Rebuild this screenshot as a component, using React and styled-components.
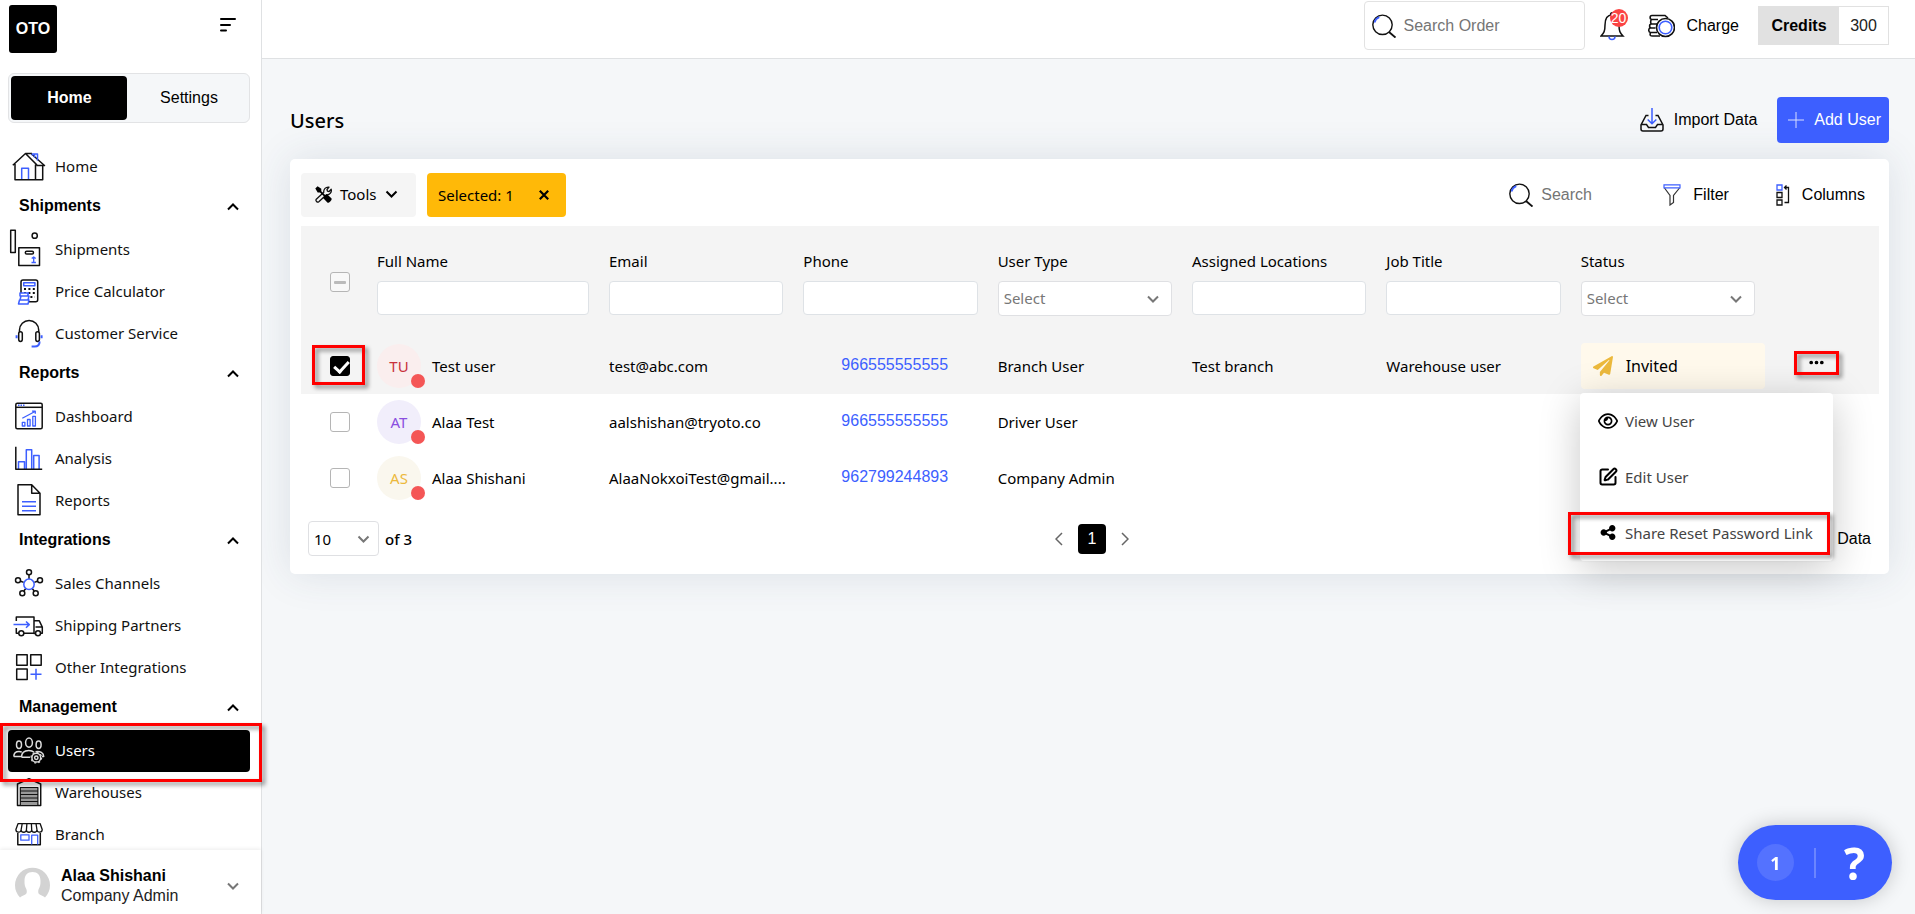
import React, { useState } from "react";
import styled, { createGlobalStyle, css } from "styled-components";
import { SquarePen } from "lucide-react";
import { FaPaperPlane } from "react-icons/fa";
import { FaRegEye, FaShareNodes, FaEllipsis } from "react-icons/fa6";

const blue = "#3d5fff";
const humanist = `"Segoe UI", "Noto Sans", "Open Sans", sans-serif`;
const grotesk = `Arial, "Liberation Sans", sans-serif`;

const GlobalStyle = createGlobalStyle`
  * {
    box-sizing: border-box;
  }
  body {
    margin: 0;
    background: #f5f7f9;
    color: #000;
    font-family: ${grotesk};
    font-size: 16px;
  }
  button, input, select {
    font-family: inherit;
    font-size: inherit;
    color: inherit;
  }
  button {
    border: none;
    background: none;
    padding: 0;
    cursor: pointer;
  }
  svg {
    display: block;
    flex: none;
  }
`;

const Layout = styled.div`
  display: grid;
  grid-template-columns: 262px minmax(0, 1fr);
  min-height: 100vh;
`;

/* ---------- sidebar ---------- */

const Sidebar = styled.aside`
  position: sticky;
  top: 0;
  z-index: 2;
  height: 100vh;
  display: flex;
  flex-direction: column;
  background: #fff;
  border-right: 1px solid #dfe1e3;
`;
const Brand = styled.div`
  display: flex;
  justify-content: space-between;
  padding: 5px 25px 20px 9px;
`;
const Logo = styled.div`
  width: 48px;
  height: 48px;
  border-radius: 3px;
  background: #000;
  color: #fff;
  font-weight: 700;
  font-size: 16px;
  line-height: 48px;
  text-align: center;
`;
const MenuToggle = styled.button`
  align-self: flex-start;
  margin-top: 13px;
`;
const Tabs = styled.div`
  display: grid;
  grid-template-columns: 116px 1fr;
  height: 50px;
  margin: 0 11px 0 8px;
  padding: 2px;
  background: #f5f7f9;
  border: 1px solid #e2e3e5;
  border-radius: 6px;
`;
const Tab = styled.button`
  padding-left: 4px;
  border-radius: 4px;
  ${props =>
    props.$active &&
    css`
      padding-left: 1px;
      background: #000;
      color: #fff;
      font-weight: 700;
    `}
`;
const Nav = styled.nav`
  flex: 1;
  min-height: 0;
  padding: 23px 11px 0 8px;
`;
const NavHead = styled.button`
  display: flex;
  justify-content: space-between;
  width: 100%;
  height: 41px;
  padding: 8px 11px 0;
  font-weight: 700;
  line-height: 20px;
  svg {
    margin-top: 7px;
  }
`;
const NavLink = styled.a`
  position: relative;
  display: flex;
  align-items: center;
  height: 42px;
  border-radius: 4px;
  font-family: ${humanist};
  font-size: 15px;
  line-height: 40px;
  text-decoration: none;
  color: ${props => (props.$active ? "#fff" : "#111")};
  background: ${props => (props.$active ? "#000" : "none")};
`;
const NavText = styled.span`
  height: 42px;
`;
const Account = styled.button`
  position: relative;
  display: flex;
  align-items: center;
  height: 64px;
  padding: 8px 21px 0 15px;
  background: #fff;
  box-shadow: 0 -1px 4px rgba(0, 0, 0, 0.08);
  text-align: left;
`;
const AccountText = styled.span`
  flex: 1;
  padding-left: 11px;
  line-height: 20px;
  color: #222;
  strong {
    display: block;
    color: #000;
  }
`;

/* frame drawn round a control to point at it */
const Mark = styled.span`
  position: absolute;
  inset: ${props => props.$inset};
  z-index: 3;
  border: 3px solid #f00;
  filter: drop-shadow(3px 3px 2px rgba(0, 0, 0, 0.45));
  pointer-events: none;
`;

/* ---------- top bar ---------- */

const Main = styled.main`
  min-width: 0;
`;
const TopBar = styled.header`
  display: flex;
  align-items: center;
  justify-content: flex-end;
  height: 59px;
  padding: 0 26px 7px;
  background: #fff;
  border-bottom: 1px solid #dfe1e3;
`;
const OrderSearch = styled.label`
  display: flex;
  align-items: center;
  gap: 8px;
  width: 221px;
  height: 49px;
  padding: 0 7px;
  border: 1px solid #e2e2e2;
  border-radius: 4px;
`;
const PlainInput = styled.input`
  width: ${props => props.$width || "100%"};
  min-width: 0;
  border: none;
  outline: none;
  padding: 0;
  background: none;
  &::placeholder {
    color: #757575;
    opacity: 1;
  }
`;
const BellButton = styled.button`
  position: relative;
  margin: 0 21px 0 15px;
`;
const Badge = styled.span`
  position: absolute;
  top: -2px;
  right: -1px;
  width: 18px;
  height: 18px;
  border-radius: 50%;
  background: #fb4444;
  color: #fff;
  font-size: 14px;
  line-height: 18px;
  text-align: center;
`;
const IconButton = styled.button`
  display: flex;
  align-items: center;
  gap: ${props => props.$gap || "12px"};
`;
const Credits = styled.div`
  display: flex;
  height: 39px;
  margin-left: 19px;
  border: 1px solid #e1e1e1;
  line-height: 37px;
  color: #222;
  strong {
    width: 80px;
    background: #e1e1e1;
    color: #000;
    text-align: center;
  }
  span {
    width: 49px;
    text-align: center;
  }
`;

/* ---------- page ---------- */

const Page = styled.section`
  padding: 38px 26px 28px 28px;
`;
const PageHead = styled.div`
  display: flex;
  align-items: center;
  height: 46px;
  margin-bottom: 16px;
`;
const Title = styled.h1`
  flex: 1;
  margin: 0;
  font-family: ${humanist};
  font-size: 20px;
  font-weight: 500;
`;
const AddButton = styled(IconButton)`
  height: 46px;
  margin-left: 20px;
  padding: 0 8px 0 11px;
  border-radius: 4px;
  background: ${blue};
  color: #fff;
`;
const Card = styled.div`
  padding: 14px 10px 18px 11px;
  background: #fff;
  border-radius: 5px;
  box-shadow: 0 0 40px rgba(50, 70, 100, 0.13);
`;
const Toolbar = styled.div`
  display: flex;
  align-items: center;
  height: 44px;
  margin-bottom: 9px;
  padding-right: 14px;
`;
const ToolsButton = styled(IconButton)`
  width: 115px;
  height: 44px;
  padding: 0 0 2px 14px;
  margin-right: 11px;
  border-radius: 4px;
  background: #f5f5f5;
  font-family: ${humanist};
  font-size: 15px;
`;
const Selected = styled.div`
  display: flex;
  align-items: center;
  justify-content: space-between;
  width: 139px;
  height: 44px;
  padding: 0 17px 0 11px;
  margin-right: auto;
  border-radius: 4px;
  background: #ffb908;
  font-family: ${humanist};
  font-size: 15px;
`;
const TableSearch = styled.label`
  display: flex;
  align-items: center;
  gap: 8px;
`;
const ToolbarButton = styled(IconButton)`
  margin-left: ${props => props.$left};
`;

const Table = styled.table`
  width: 100%;
  table-layout: fixed;
  border-collapse: collapse;
  font-family: ${humanist};
  font-size: 15px;
`;
const Th = styled.th`
  height: 112px;
  padding: 0 10px;
  background: #f4f4f4;
  font-weight: 400;
  text-align: left;
  line-height: 24px;
`;
const FieldLabel = styled.label`
  display: block;
  margin-bottom: 8px;
`;
const FilterInput = styled.input`
  display: block;
  width: 100%;
  height: 34px;
  padding: 0 8px;
  border: 1px solid #dee2e6;
  border-radius: 4px;
  background: #fff;
`;
const SelectWrap = styled.span`
  position: relative;
  display: block;
  width: ${props => props.$width || "100%"};
  svg {
    position: absolute;
    top: 14px;
    right: ${props => props.$right || "13px"};
    pointer-events: none;
  }
`;
const Select = styled.select`
  display: block;
  width: 100%;
  height: 35px;
  padding: 0 5px;
  appearance: none;
  border: 1px solid #dfe0e3;
  border-radius: 4px;
  background: #fff;
  color: ${props => (props.$muted ? "#777" : "#000")};
`;
const Tr = styled.tr`
  height: 56px;
  background: ${props => (props.$selected ? "#f4f4f4" : "#fff")};
`;
const Td = styled.td`
  padding: ${props => props.$padding || "0 10px"};
  white-space: nowrap;
`;
const CheckCell = styled.div`
  position: relative;
  width: 20px;
  height: 20px;
  margin-left: 19px;
`;
const Checkbox = styled.input`
  position: relative;
  display: block;
  width: 20px;
  height: 20px;
  margin: 0;
  appearance: none;
  border: 1px solid #b5b5b5;
  border-radius: 3px;
  background: #fff;
  &:checked {
    background: #000;
    border-color: #000;
  }
  &:checked::after {
    content: "";
    position: absolute;
    left: 6px;
    top: 1px;
    width: 6px;
    height: 12px;
    border: solid #fff;
    border-width: 0 3px 3px 0;
    transform: rotate(42deg);
  }
  &:indeterminate {
    background: #f8f8f8;
  }
  &:indeterminate::after {
    content: "";
    position: absolute;
    left: 3px;
    top: 8px;
    width: 12px;
    height: 3px;
    border-radius: 1px;
    background: #bbb;
  }
`;
const Person = styled.div`
  display: flex;
  align-items: center;
  gap: 11px;
`;
const Avatar = styled.span`
  position: relative;
  width: 44px;
  height: 44px;
  border-radius: 50%;
  background: ${props => props.$bg};
  color: ${props => props.$color};
  line-height: 45px;
  text-align: center;
  &::after {
    content: "";
    position: absolute;
    right: -4px;
    bottom: 0;
    width: 14px;
    height: 14px;
    border-radius: 50%;
    background: #f45656;
  }
`;
const PhoneLink = styled.a`
  display: block;
  padding: 0 0 2px 38px;
  font-family: ${grotesk};
  font-size: 16px;
  color: ${blue};
  text-decoration: none;
`;
const Status = styled.div`
  display: flex;
  align-items: center;
  gap: 13px;
  height: 46px;
  padding: 0 12px;
  border-radius: 4px;
  background: #fff9ec;
  font-size: 16px;
`;
const Actions = styled.div`
  position: relative;
  width: 45px;
  margin: 0 0 7px 29px;
`;
const MoreButton = styled.button`
  display: flex;
  align-items: center;
  justify-content: center;
  width: 45px;
  height: 24px;
`;
const Menu = styled.div`
  position: absolute;
  top: 42px;
  right: 6px;
  z-index: 2;
  width: 253px;
  border-radius: 4px;
  background: #fff;
  box-shadow: 0 8px 40px rgba(0, 0, 0, 0.22);
`;
const MenuItem = styled.button`
  position: relative;
  display: flex;
  align-items: center;
  gap: 7px;
  width: 100%;
  height: 56px;
  padding-left: 18px;
  color: #444;
  svg {
    width: 20px;
    color: #000;
  }
`;

const Footer = styled.div`
  display: grid;
  grid-template-columns: 1fr auto 1fr;
  align-items: center;
  margin-top: 15px;
  padding: 0 8px 0 7px;
`;
const PageSize = styled.label`
  display: flex;
  align-items: center;
  gap: 6px;
  font-family: ${humanist};
  font-size: 15px;
  font-weight: 500;
`;
const Pager = styled.div`
  display: flex;
  align-items: center;
  gap: 15px;
  padding-left: 5px;
`;
const PageNumber = styled.button`
  width: 28px;
  height: 30px;
  border-radius: 4px;
  background: #000;
  color: #fff;
`;
const DataButton = styled.button`
  justify-self: end;
`;

const HelpWidget = styled.div`
  position: fixed;
  right: 23px;
  bottom: 14px;
  display: flex;
  align-items: center;
  height: 75px;
  padding: 0 27px 0 19px;
  border-radius: 38px;
  background: ${blue};
  box-shadow: 0 0 20px rgba(0, 0, 0, 0.2);
  color: #fff;
  font-family: "Open Sans", sans-serif;
  font-weight: 700;
`;
const HelpCount = styled.span`
  width: 37px;
  height: 37px;
  border-radius: 50%;
  background: #5472ff;
  font-size: 18px;
  line-height: 38px;
  text-align: center;
`;
const HelpButton = styled.button`
  height: 30px;
  margin-left: 20px;
  padding-left: 28px;
  border-left: 2px solid #6b85ff;
  font-size: 44px;
  font-weight: 700;
  line-height: 30px;
`;

/* ---------- icons ---------- */

const Chevron = ({ up, color = "#000", width = 12 }) => (
  <svg width={width} height="8" viewBox="0 0 12 8" fill="none" stroke={color} strokeWidth="2">
    <path d={up ? "M1 6.5 6 1.5l5 5" : "M1 1.5l5 5 5-5"} />
  </svg>
);

const NavIcon = ({ children, color = "#111" }) => (
  <svg width="47" height="42" viewBox="0 0 47 42" fill="none" stroke={color} strokeWidth="1.5" strokeLinejoin="round">
    {children}
  </svg>
);

const icons = {
  home: (
    <>
      <path d="M4.8 19.3 17.5 7.5H24M17.5 7.5 29 19M23.5 8l13 11.5h-8M7 18v15.7h27.7V20M27.5 18.5v15" />
      <path stroke={blue} d="M13.7 33V22.3h6.8V33M24.5 9.5 24.3 8h5.2v6.5M26.5 8.5v3" />
    </>
  ),
  shipments: (
    <>
      <path d="M2.7 1.2h4.6v22.3H2.7zM10.8 18.8h20.7v17.8H10.8z" />
      <circle cx="26.7" cy="6.7" r="2.6" />
      <rect x="17.3" y="22.3" width="8.2" height="2.8" rx="1.4" />
      <path stroke={blue} strokeWidth="1.3" d="M25.7 33.4v-5M23.7 29.6l2-1.7 2 1.7M23.5 33.5h4.4" />
    </>
  ),
  calculator: (
    <>
      <rect x="13" y="9" width="16.7" height="21.8" rx="2" />
      <path strokeWidth="2" strokeDasharray="2 2.4" d="M16 18h11M16 22h11M18 26h9" />
      <rect stroke={blue} x="15.7" y="11.8" width="11.2" height="3" />
      <path stroke={blue} fill="#fff" d="M12 22h8.5l-1 3H12zM13 25h8l-1 4h-8zM11.5 29H21l-1 4h-9.5z" />
    </>
  ),
  headset: (
    <>
      <path d="M11.5 19v-2a9.6 9.6 0 0 1 19.2 0v2" />
      <rect x="10.7" y="18.8" width="3.6" height="9.6" rx="1.8" />
      <rect x="27.8" y="18.8" width="3.6" height="9.6" rx="1.8" />
      <path stroke={blue} d="M8.6 22.3v3M33.6 22.3v3M31.6 28.4c0 3-2 5-5 5h-3" strokeWidth="2" />
    </>
  ),
  dashboard: (
    <>
      <rect x="7.8" y="7.2" width="26.4" height="25.6" rx="1.5" />
      <path d="M8 11.3h26" />
      <path stroke={blue} strokeDasharray="1.5 1" d="M10 9.3h6.5" />
      <path stroke={blue} strokeWidth="1.3" d="M14.3 26.3h2.6V30h-2.6zM19.5 23.5h2.6V30h-2.6zM24.8 20.3h2.6V30h-2.6zM14.3 22.3 27 15.5m-3-.3h3.3v2.5" />
    </>
  ),
  analysis: (
    <>
      <path stroke={blue} d="M10.5 31v-7.3h6V31M18.3 31V11.7h5.4V31M25.7 31V17.5h5.4V31" />
      <path d="M7.8 8.7v22.6h26.4" />
    </>
  ),
  reports: (
    <>
      <path d="M10 4.8h13.7l8.3 8.5v21.4H10zM23.7 5v8.3H32" />
      <path stroke={blue} d="M14 21.7h14M14 26.2h14M14 30.7h14" />
    </>
  ),
  channels: (
    <>
      <path d="M21 12v4M12.7 18.2l3 1.2M29.3 18.2l-3 1.2M15.8 28l2-2.5M26.2 28l-2-2.5" />
      <circle cx="21" cy="9.3" r="2.5" />
      <circle cx="10" cy="17.3" r="2.5" />
      <circle cx="32" cy="17.3" r="2.5" />
      <circle cx="14.3" cy="30.3" r="2.5" />
      <circle cx="27.7" cy="30.3" r="2.5" />
      <circle stroke={blue} cx="21" cy="21.3" r="5.2" />
    </>
  ),
  truck: (
    <>
      <path d="M8.3 16v-4H26v16.5h1.3M26 15.8h5.3l3 6.2v6.3h-1.6M27.5 22h6.5M8.3 23v5.3h2.5M16 28.3h10" />
      <circle cx="13.3" cy="28.3" r="2.5" />
      <circle cx="30" cy="28.3" r="2.5" />
      <path stroke={blue} d="M5.5 19.6H21M18 16.5l3.3 3.1-3.3 3.1" />
    </>
  ),
  blocks: (
    <>
      <path d="M8.7 7.7h10.5v10.5H8.7zM22.7 7.7h10.5v10.5H22.7zM8.7 22h10.5v10.5H8.7z" />
      <path stroke={blue} d="M28 21.7v11M22.5 27.2h11" />
    </>
  ),
  users: (
    <>
      <ellipse cx="21" cy="12.6" rx="3.4" ry="4.6" />
      <ellipse cx="11" cy="14.8" rx="2.5" ry="3.7" />
      <ellipse cx="30.6" cy="14.8" rx="2.5" ry="3.7" />
      <path d="M5.8 26.5c0-3.5 2-5 5.2-5 1.2 0 2 .2 2.8.6M5.8 26.5h7.5M13.5 27.3c0-4.3 2.5-6.8 7.3-6.8 2.2 0 4 .6 5.3 1.8M13.5 27.3H22M27.5 21.7c4.7-.8 8.2 1 8.2 4.8H34" />
      <circle cx="28.3" cy="27.7" r="4.4" />
      <circle cx="28.3" cy="27.7" r="5.3" strokeWidth="1.2" strokeDasharray="2 2.1" />
      <circle cx="28.3" cy="27.7" r="1.7" />
    </>
  ),
  warehouse: (
    <>
      <path d="M9.5 33.5V12L21 6.8 32.7 12v21.5z" />
      <path fill="#999" strokeWidth="1.2" d="M12.3 15.5h17.6v18H12.3zM12.3 19h17.6M12.3 22.5h17.6M12.3 26h17.6M12.3 29.5h17.6" />
    </>
  ),
  store: (
    <>
      <path d="M9.8 19v11.800h22.5V19" />
      <path strokeWidth="1.3" d="M10 9.7h22.2l2 5.8c0 3.5-4.8 3.5-5.2.5-.4 3-5 3-5.3 0-.4 3-5 3-5.3 0-.4 3-5 3-5.3 0-.4 3-5.2 3-5.2-.5zM14.2 9.7 13.1 16M18.9 9.7 18.4 16M23.4 9.700l.3 6.300M28 9.700l1 6.300" />
      <path stroke={blue} strokeWidth="1.3" d="M12.8 20.8h8.2v5.4h-8.2zM23.7 30.5v-9.3h6v9.3" />
    </>
  )
};

const SearchIcon = () => (
  <svg width="24" height="24" viewBox="0 0 24 24" fill="none" stroke="#111" strokeWidth="1.4">
    <circle cx="10.5" cy="10.8" r="9.7" />
    <path d="M17 18l6.5 5.6" strokeWidth="1.8" />
    <path stroke={blue} strokeWidth="1.8" d="M2.500 8.500c.6-2.500 2.300-4.500 4.800-5.400" />
  </svg>
);
const BellIcon = () => (
  <svg width="27" height="30" viewBox="0 0 27 30" fill="none" stroke="#111" strokeWidth="1.5">
    <path d="M1 25c3-3 4-5 4-11 0-6 2.5-10 7-10s7 4 7 10c0 6 1 8 4 11zM10.5 4c0-3 3.5-3 3.5 0" />
    <path stroke={blue} d="M9 25.500c0 4 6 4 6 0" />
  </svg>
);
const CoinsIcon = () => (
  <svg width="27" height="24" viewBox="0 0 27 24" fill="none" stroke="#111" strokeWidth="1.6">
    <path d="M13 1.500H4c-2.500 0-2.500 4 0 4h6M4 5.500c-1.500 0-2 4.500 0 4.500h5M3.500 10C1 10 1 14 3.500 14h4M2.500 14C.2 14 .2 18.500 2.500 18.500H9M13 1.500h4l3 2.500M2.500 18.500c-1 3 0 3.500 2 3.500H12" />
    <circle cx="17.5" cy="13.500" r="9" fill="#fff" />
    <circle cx="17.5" cy="13.500" r="6.300" stroke={blue} />
  </svg>
);
const ImportIcon = () => (
  <svg width="24" height="24" viewBox="0 0 24 24" fill="none" stroke="#111" strokeWidth="1.5">
    <path d="M8.500 7.500H6L1 17v4c0 1 .8 2 2 2h18c1.200 0 2-1 2-2v-4L18 7.500h-2.500M1 16.500h5.500l2 3h7l2-3H23" />
    <path stroke={blue} d="M12 0v15.500M7.700 11.500l4.300 4.300 4.300-4.300" />
  </svg>
);
const PlusIcon = () => (
  <svg width="16" height="18" viewBox="0 0 16 18" stroke="#fff" opacity="0.8">
    <path d="M8 1v16M0 9h16" />
  </svg>
);
const ToolsIcon = () => (
  <svg width="17" height="17" viewBox="0 0 17 17">
    <path fill="none" stroke="#111" strokeWidth="1.3" strokeLinejoin="round" d="M1.300 13.200 8.800 6.300C8.300 3.300 10.800.6 14 1.100l-2 2.400.4 1.600 1.700.4 2.100-2.200c.8 3.200-1.800 6-4.800 5.400L3.800 15.700c-1.500 1.100-3.600-1-2.500-2.500z" />
    <path fill="#000" d="M.3 2.600 2.600.3 6.300 2.800v2.400l4.100 4 1.700-.9 4.500 4.300c.6 1.200-2.600 4.600-4 4.100l-4.300-4.500.8-1.700L5 6.400H2.700z" />
  </svg>
);
const FilterIcon = () => (
  <svg width="18" height="22" viewBox="0 0 18 22" fill="none" stroke="#333" strokeWidth="1.2">
    <path d="M1.500 4l5.500 7.500V21l3.500-2.500v-7L16.500 4" />
    <path stroke={blue} d="M1 .8h16v3H1z" />
  </svg>
);
const ColumnsIcon = () => (
  <svg width="14" height="22" viewBox="0 0 14 22" fill="none" stroke="#111" strokeWidth="1.3">
    <path d="M1 8.500h5v5H1zM1 16h5v5H1zM8.500 18.500h4v-15H8.500M10.500 1.500l-2 2 2 2" />
    <path stroke={blue} d="M1 1h5v5H1z" />
  </svg>
);
const CloseIcon = () => (
  <svg width="10" height="10" viewBox="0 0 10 10" stroke="#000" strokeWidth="2.2">
    <path d="M.8.8l8.400 8.400M9.200.8L.8 9.200" />
  </svg>
);
const AccountIcon = () => (
  <svg width="35" height="38" viewBox="0 0 35 38">
    <path fill="#d3d3d3" d="M5 30.500a17.500 17.500 0 1 1 25 0c-1.500-1.500-4-2.200-6-3.500-1-.7-1-3.500-.3-5 1.600-2.500 1.800-5 1.800-8 0-6-3-9-8-9s-8 3-8 9c0 3 .2 5.500 1.800 8 .7 1.500.7 4.300-.3 5-2 1.300-4.500 2-6 3.500z" />
  </svg>
);

/* ---------- data ---------- */

const sections = [
  { items: [["Home", "home"]] },
  {
    title: "Shipments",
    items: [
      ["Shipments", "shipments"],
      ["Price Calculator", "calculator"],
      ["Customer Service", "headset"]
    ]
  },
  {
    title: "Reports",
    items: [
      ["Dashboard", "dashboard"],
      ["Analysis", "analysis"],
      ["Reports", "reports"]
    ]
  },
  {
    title: "Integrations",
    items: [
      ["Sales Channels", "channels"],
      ["Shipping Partners", "truck"],
      ["Other Integrations", "blocks"]
    ]
  },
  {
    title: "Management",
    items: [
      ["Users", "users"],
      ["Warehouses", "warehouse"],
      ["Branch", "store"]
    ]
  }
];

const columns = [
  { label: "Full Name" },
  { label: "Email" },
  { label: "Phone" },
  { label: "User Type", select: true },
  { label: "Assigned Locations" },
  { label: "Job Title" },
  { label: "Status", select: true }
];

const users = [
  {
    id: 1,
    initials: "TU",
    color: "#c8323c",
    bg: "#faeeee",
    name: "Test user",
    email: "test@abc.com",
    phone: "966555555555",
    type: "Branch User",
    location: "Test branch",
    job: "Warehouse user",
    status: "Invited"
  },
  {
    id: 2,
    initials: "AT",
    color: "#8a4fe0",
    bg: "#f1eefb",
    name: "Alaa Test",
    email: "aalshishan@tryoto.co",
    phone: "966555555555",
    type: "Driver User"
  },
  {
    id: 3,
    initials: "AS",
    color: "#ecb93c",
    bg: "#faf7ee",
    name: "Alaa Shishani",
    email: "AlaaNokxoiTest@gmail....",
    phone: "962799244893",
    type: "Company Admin"
  }
];

function SideNav() {
  return (
    <Sidebar>
      <Brand>
        <Logo>OTO</Logo>
        <MenuToggle aria-label="Collapse menu">
          <svg width="16" height="14" viewBox="0 0 16 14" stroke="#000" strokeWidth="2" strokeLinecap="round">
            <path d="M1 1h14M1 7h9M1 12.5h5" />
          </svg>
        </MenuToggle>
      </Brand>
      <Tabs>
        <Tab $active>Home</Tab>
        <Tab>Settings</Tab>
      </Tabs>
      <Nav>
        {sections.map((section, i) => (
          <div key={i}>
            {section.title && (
              <NavHead>
                {section.title}
                <Chevron up />
              </NavHead>
            )}
            {section.items.map(([label, icon]) => {
              const active = label === "Users";
              return (
                <NavLink key={label} href="#" $active={active}>
                  <NavIcon color={active ? "#ddd" : "#111"}>{icons[icon]}</NavIcon>
                  <NavText>{label}</NavText>
                  {active && <Mark $inset="-7px -12px -10px -8px" />}
                </NavLink>
              );
            })}
          </div>
        ))}
      </Nav>
      <Account>
        <AccountIcon />
        <AccountText>
          <strong>Alaa Shishani</strong>
          Company Admin
        </AccountText>
        <Chevron color="#777" width={14} />
      </Account>
    </Sidebar>
  );
}

function ColumnHead({ label, select }) {
  const id = "filter-" + label.toLowerCase().replace(" ", "-");
  return (
    <Th>
      <FieldLabel htmlFor={id}>{label}</FieldLabel>
      {select ? (
        <SelectWrap>
          <Select id={id} $muted>
            <option>Select</option>
          </Select>
          <Chevron color="#777" />
        </SelectWrap>
      ) : (
        <FilterInput id={id} />
      )}
    </Th>
  );
}

function UserRow({ user, selected, onToggle }) {
  return (
    <Tr $selected={selected}>
      <Td>
        <CheckCell>
          <Checkbox
            type="checkbox"
            aria-label={`Select ${user.name}`}
            checked={selected}
            onChange={() => onToggle(user.id)}
          />
          {selected && <Mark $inset="-11px -15px -9px -18px" />}
        </CheckCell>
      </Td>
      <Td>
        <Person>
          <Avatar $bg={user.bg} $color={user.color}>
            {user.initials}
          </Avatar>
          {user.name}
        </Person>
      </Td>
      <Td $padding="0 0 0 10px">{user.email}</Td>
      <Td>
        <PhoneLink href={`tel:${user.phone}`}>{user.phone}</PhoneLink>
      </Td>
      <Td>{user.type}</Td>
      <Td>{user.location}</Td>
      <Td>{user.job}</Td>
      <Td $padding="0 0 0 10px">
        {user.status && (
          <Status>
            <FaPaperPlane size={20} color="#ecb93c" />
            {user.status}
          </Status>
        )}
      </Td>
      <Td $padding="0">
        {user.status && (
          <Actions>
            <MoreButton aria-label="More">
              <FaEllipsis size={17} />
              <Mark $inset="0" />
            </MoreButton>
            <Menu>
              <MenuItem>
                <FaRegEye size={20} />
                View User
              </MenuItem>
              <MenuItem>
                <SquarePen size={20} strokeWidth={2.4} />
                Edit User
              </MenuItem>
              <MenuItem>
                <FaShareNodes size={17} />
                Share Reset Password Link
                <Mark $inset="7px 3px 6px -12px" />
              </MenuItem>
            </Menu>
          </Actions>
        )}
      </Td>
    </Tr>
  );
}

export default function App() {
  const [selected, setSelected] = useState([1]);

  const toggle = id =>
    setSelected(
      selected.includes(id) ? selected.filter(s => s !== id) : [...selected, id]
    );

  return (
    <>
      <GlobalStyle />
      <Layout>
        <SideNav />
        <Main>
          <TopBar>
            <OrderSearch>
              <SearchIcon />
              <PlainInput placeholder="Search Order" aria-label="Search Order" />
            </OrderSearch>
            <BellButton aria-label="Notifications">
              <BellIcon />
              <Badge>20</Badge>
            </BellButton>
            <IconButton>
              <CoinsIcon />
              Charge
            </IconButton>
            <Credits>
              <strong>Credits</strong>
              <span>300</span>
            </Credits>
          </TopBar>

          <Page>
            <PageHead>
              <Title>Users</Title>
              <IconButton $gap="10px">
                <ImportIcon />
                Import Data
              </IconButton>
              <AddButton $gap="10px">
                <PlusIcon />
                Add User
              </AddButton>
            </PageHead>

            <Card>
              <Toolbar>
                <ToolsButton $gap="8px">
                  <ToolsIcon />
                  Tools
                  <Chevron width={13} />
                </ToolsButton>
                <Selected>
                  Selected: {selected.length}
                  <button aria-label="Clear selection" onClick={() => setSelected([])}>
                    <CloseIcon />
                  </button>
                </Selected>
                <TableSearch>
                  <SearchIcon />
                  <PlainInput $width="104px" placeholder="Search" aria-label="Search" />
                </TableSearch>
                <ToolbarButton $left="18px">
                  <FilterIcon />
                  Filter
                </ToolbarButton>
                <ToolbarButton $left="47px">
                  <ColumnsIcon />
                  Columns
                </ToolbarButton>
              </Toolbar>

              <Table>
                <colgroup>
                  <col width="66" />
                  <col width="232" />
                  <col span="6" />
                  <col width="114" />
                </colgroup>
                <thead>
                  <tr>
                    <Th>
                      <CheckCell>
                        <Checkbox
                          type="checkbox"
                          aria-label="Select all"
                          ref={el => {
                            if (el) el.indeterminate = selected.length > 0;
                          }}
                        />
                      </CheckCell>
                    </Th>
                    {columns.map(c => (
                      <ColumnHead key={c.label} {...c} />
                    ))}
                    <Th />
                  </tr>
                </thead>
                <tbody>
                  {users.map(u => (
                    <UserRow
                      key={u.id}
                      user={u}
                      selected={selected.includes(u.id)}
                      onToggle={toggle}
                    />
                  ))}
                </tbody>
              </Table>

              <Footer>
                <PageSize>
                  <SelectWrap $width="71px" $right="9px">
                    <Select>
                      <option>10</option>
                    </Select>
                    <Chevron color="#777" width={13} />
                  </SelectWrap>
                  of 3
                </PageSize>
                <Pager>
                  <button aria-label="Previous page">
                    <svg width="8" height="14" viewBox="0 0 8 14" fill="none" stroke="#666" strokeWidth="1.5">
                      <path d="M7 1 1 7l6 6" />
                    </svg>
                  </button>
                  <PageNumber>1</PageNumber>
                  <button aria-label="Next page">
                    <svg width="8" height="14" viewBox="0 0 8 14" fill="none" stroke="#666" strokeWidth="1.5">
                      <path d="M1 1l6 6-6 6" />
                    </svg>
                  </button>
                </Pager>
                <DataButton>Data</DataButton>
              </Footer>
            </Card>
          </Page>
        </Main>
      </Layout>
      <HelpWidget>
        <HelpCount>1</HelpCount>
        <HelpButton aria-label="Help">?</HelpButton>
      </HelpWidget>
    </>
  );
}
